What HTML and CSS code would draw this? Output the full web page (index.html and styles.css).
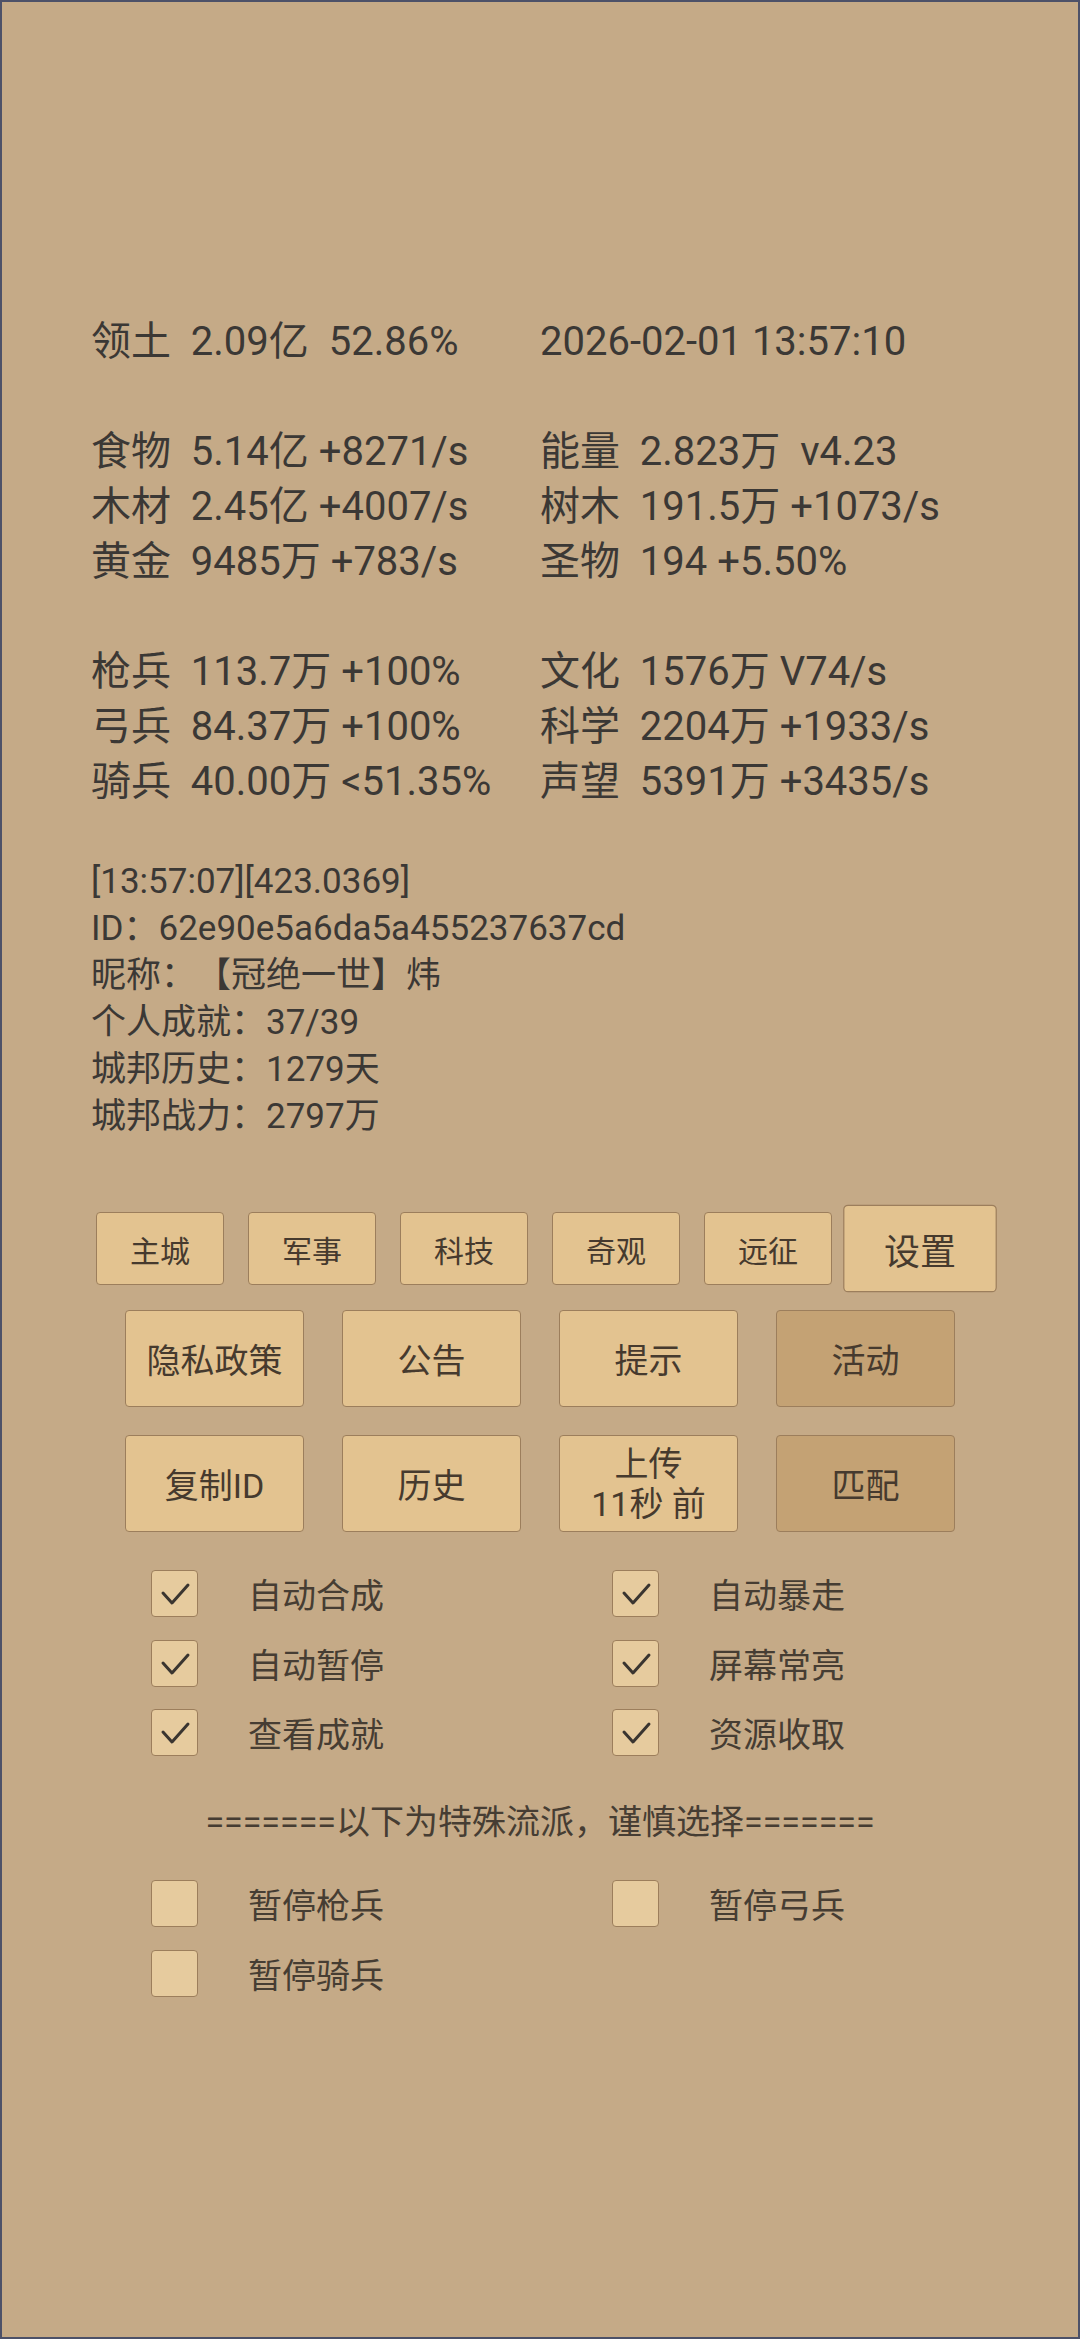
FILE: index.html
```html
<!DOCTYPE html>
<html lang="zh">
<head>
<meta charset="utf-8">
<title>城邦</title>
<link rel="stylesheet" href="styles.css">
</head>
<body>
<div class="screen">
  <div class="stats">
    <div class="cell">领土  2.09亿  52.86%</div><div class="cell">2026-02-01 13:57:10</div>
    <div class="blank"></div>
    <div class="cell">食物  5.14亿 +8271/s</div><div class="cell">能量  2.823万  v4.23</div>
    <div class="cell">木材  2.45亿 +4007/s</div><div class="cell">树木  191.5万 +1073/s</div>
    <div class="cell">黄金  9485万 +783/s</div><div class="cell">圣物  194 +5.50%</div>
    <div class="blank"></div>
    <div class="cell">枪兵  113.7万 +100%</div><div class="cell">文化  1576万 V74/s</div>
    <div class="cell">弓兵  84.37万 +100%</div><div class="cell">科学  2204万 +1933/s</div>
    <div class="cell">骑兵  40.00万 &lt;51.35%</div><div class="cell">声望  5391万 +3435/s</div>
  </div>

  <div class="info">
    <div>[13:57:07][423.0369]</div>
    <div>ID：62e90e5a6da5a455237637cd</div>
    <div>昵称：【冠绝一世】炜</div>
    <div>个人成就：37/39</div>
    <div>城邦历史：1279天</div>
    <div>城邦战力：2797万</div>
  </div>

  <div class="buttons">
    <div class="tabs">
      <div class="tab">主城</div>
      <div class="tab">军事</div>
      <div class="tab">科技</div>
      <div class="tab">奇观</div>
      <div class="tab">远征</div>
      <div class="tab active">设置</div>
    </div>
    <div class="btn-row">
      <div class="btn">隐私政策</div>
      <div class="btn">公告</div>
      <div class="btn">提示</div>
      <div class="btn dark">活动</div>
    </div>
    <div class="btn-row row3">
      <div class="btn">复制ID</div>
      <div class="btn">历史</div>
      <div class="btn two-line">上传<br>11秒 前</div>
      <div class="btn dark">匹配</div>
    </div>
  </div>

  <div class="checks">
    <div class="check"><span class="box on"><svg viewBox="0 0 47 47"><polyline points="12,23 21,33 37,15"/></svg></span><span class="label">自动合成</span></div>
    <div class="check"><span class="box on"><svg viewBox="0 0 47 47"><polyline points="12,23 21,33 37,15"/></svg></span><span class="label">自动暴走</span></div>
    <div class="check"><span class="box on"><svg viewBox="0 0 47 47"><polyline points="12,23 21,33 37,15"/></svg></span><span class="label">自动暂停</span></div>
    <div class="check"><span class="box on"><svg viewBox="0 0 47 47"><polyline points="12,23 21,33 37,15"/></svg></span><span class="label">屏幕常亮</span></div>
    <div class="check"><span class="box on"><svg viewBox="0 0 47 47"><polyline points="12,23 21,33 37,15"/></svg></span><span class="label">查看成就</span></div>
    <div class="check"><span class="box on"><svg viewBox="0 0 47 47"><polyline points="12,23 21,33 37,15"/></svg></span><span class="label">资源收取</span></div>
  </div>

  <div class="separator">=======以下为特殊流派，谨慎选择=======</div>

  <div class="checks special">
    <div class="check"><span class="box"></span><span class="label">暂停枪兵</span></div>
    <div class="check"><span class="box"></span><span class="label">暂停弓兵</span></div>
    <div class="check"><span class="box"></span><span class="label">暂停骑兵</span></div>
  </div>
</div>
</body>
</html>
```

FILE: styles.css
```css
html, body {
  margin: 0;
  padding: 0;
}

body {
  font-family: "Roboto", "Noto Sans CJK SC", sans-serif;
  color: #3b3835;
  text-spacing-trim: space-all;
}

.screen {
  width: 1080px;
  height: 2339px;
  box-sizing: border-box;
  border: 2px solid #4d5168;
  background: #c5aa87;
  padding-top: 312px;
  overflow: hidden;
}

.stats {
  margin-left: 89px;
  display: grid;
  grid-template-columns: 449px auto;
  font-size: 40px;
  line-height: 55px;
}

.stats .cell {
  white-space: pre;
}

.stats .blank {
  grid-column: 1 / span 2;
  height: 55px;
}

.info {
  margin: 49px 0 0 89px;
  font-size: 35px;
  line-height: 47px;
}

.buttons {
  margin-top: 72px;
  display: flex;
  flex-direction: column;
  align-items: center;
}

.tabs {
  display: flex;
  gap: 24px;
}

.tab {
  width: 128px;
  height: 73px;
  box-sizing: border-box;
  display: flex;
  align-items: center;
  justify-content: center;
  background: #e3c390;
  border: 1.5px solid #9c7e5c;
  border-radius: 4px;
  font-size: 30px;
  color: #463a2e;
}

.tab.active {
  transform: scale(1.2);
}

.btn-row {
  display: flex;
  gap: 38px;
  margin-top: 25px;
}

.btn-row.row3 {
  margin-top: 28px;
}

.btn {
  width: 179px;
  height: 97px;
  box-sizing: border-box;
  display: flex;
  align-items: center;
  justify-content: center;
  text-align: center;
  background: #e3c390;
  border: 1.5px solid #9c7e5c;
  border-radius: 4px;
  font-size: 34px;
  color: #463a2e;
}

.btn.dark {
  background: #c4a274;
}

.btn.two-line {
  line-height: 40px;
}

.checks {
  margin: 38px 0 0 149px;
  display: grid;
  grid-template-columns: 461px auto;
  row-gap: 22.5px;
}

.checks.special {
  margin-top: 34px;
}

.check {
  display: flex;
  align-items: center;
  height: 47px;
}

.box {
  width: 47px;
  height: 47px;
  box-sizing: border-box;
  background: #e6cb9e;
  border: 1.5px solid #9c7e5c;
  border-radius: 4px;
  display: flex;
  align-items: center;
  justify-content: center;
  flex: none;
  overflow: visible;
}

.box svg {
  width: 47px;
  height: 47px;
  flex: none;
}

.box svg polyline {
  fill: none;
  stroke: #3a3530;
  stroke-width: 3;
  stroke-linecap: round;
  stroke-linejoin: round;
}

.label {
  margin-left: 50px;
  font-size: 34px;
  color: #463d33;
}

.separator {
  margin-top: 43px;
  text-align: center;
  font-size: 34px;
  line-height: 47px;
  color: #463d33;
}
```
